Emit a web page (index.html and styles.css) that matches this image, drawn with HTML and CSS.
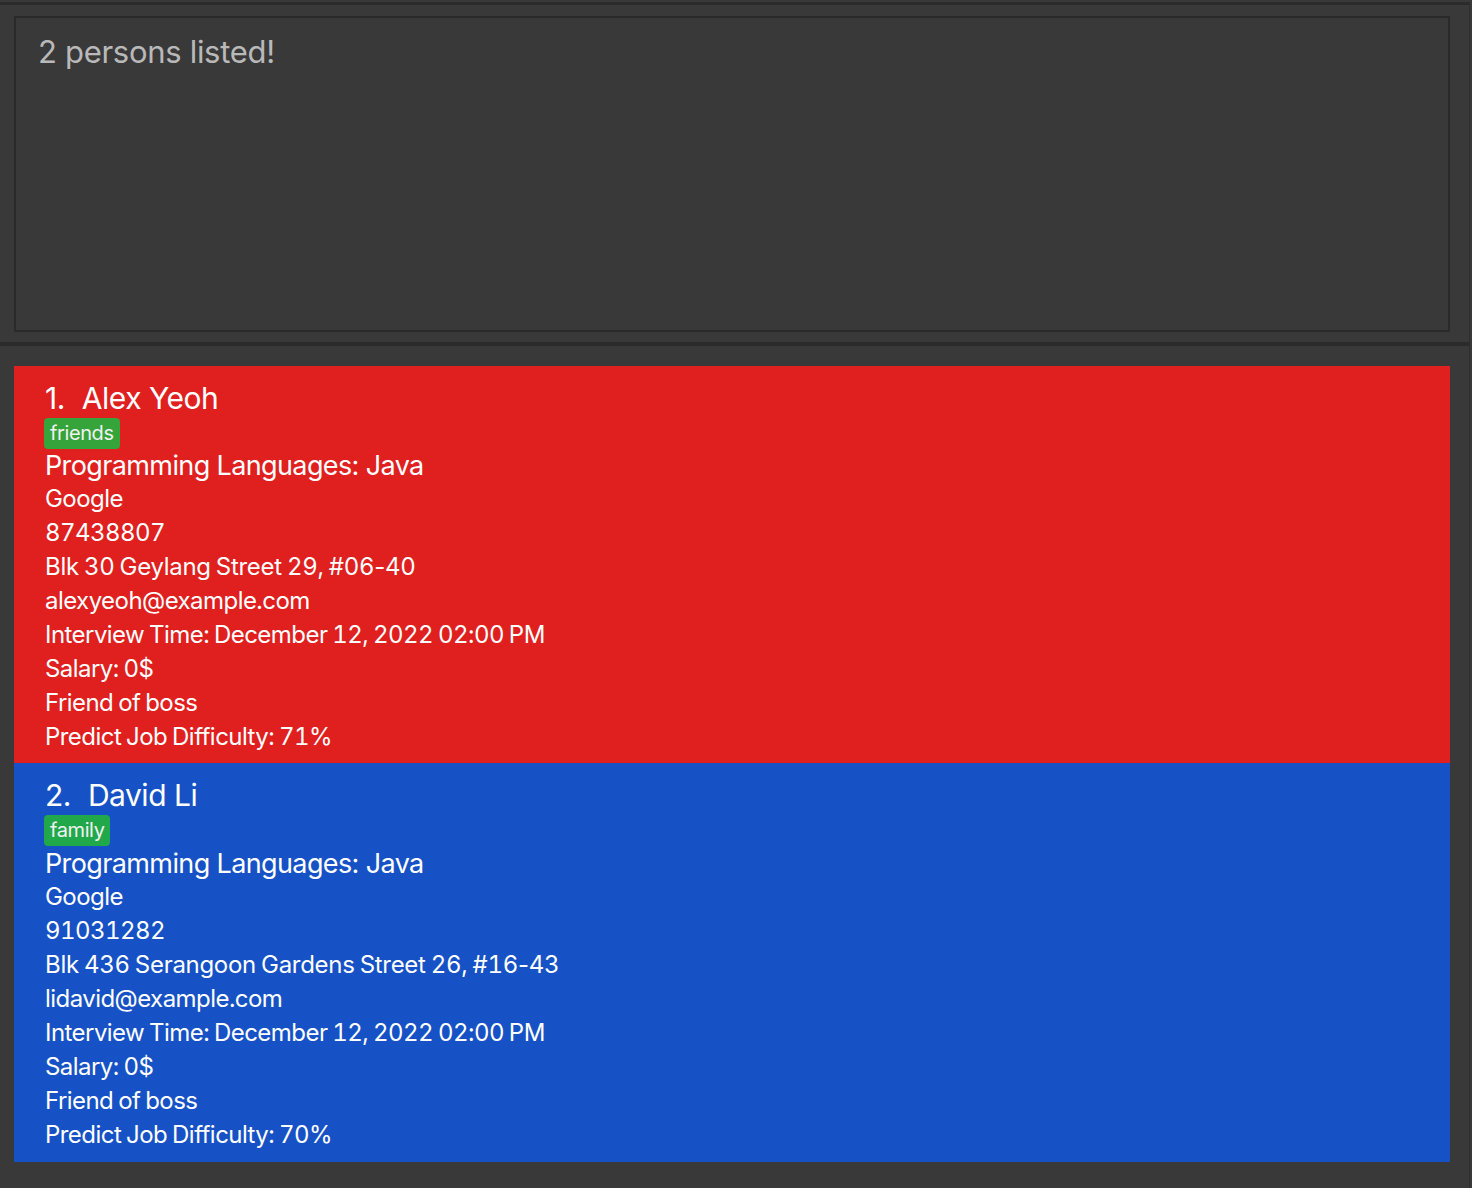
FILE: index.html
```html
<!DOCTYPE html>
<html>
<head>
<meta charset="utf-8">
<link rel="stylesheet" href="styles.css">
</head>
<body>
<div class="app">
  <div class="topbar"></div>
  <div class="result-pane">
    <div class="result-box">2 persons listed!</div>
  </div>
  <div class="separator"></div>
  <div class="list-pane">
    <div class="card card-red">
      <div class="name"><span class="idx">1.</span><span>Alex Yeoh</span></div>
      <div class="tags"><span class="tag tag-friends">friends</span></div>
      <div class="lang">Programming Languages: Java</div>
      <div class="line">Google</div>
      <div class="line">87438807</div>
      <div class="line address">Blk 30 Geylang Street 29, #06<span class="hy">-</span>40</div>
      <div class="line">alexyeoh@example.com</div>
      <div class="line">Interview Time: December 12, 2022 02:00 PM</div>
      <div class="line">Salary: 0$</div>
      <div class="line">Friend of boss</div>
      <div class="line">Predict Job Difficulty: 71%</div>
    </div>
    <div class="card card-blue">
      <div class="name"><span class="idx">2.</span><span>David Li</span></div>
      <div class="tags"><span class="tag tag-family">family</span></div>
      <div class="lang">Programming Languages: Java</div>
      <div class="line">Google</div>
      <div class="line">91031282</div>
      <div class="line address">Blk 436 Serangoon Gardens Street 26, #16<span class="hy">-</span>43</div>
      <div class="line">lidavid@example.com</div>
      <div class="line">Interview Time: December 12, 2022 02:00 PM</div>
      <div class="line">Salary: 0$</div>
      <div class="line">Friend of boss</div>
      <div class="line">Predict Job Difficulty: 70%</div>
    </div>
  </div>
</div>
</body>
</html>
```

FILE: styles.css
```css
html, body {
  margin: 0;
  padding: 0;
  background: #393939;
  height: 1188px;
  overflow: hidden;
}

.app {
  width: 1469px;
  height: 1188px;
  border-right: 1px solid #2e2e2e;
  font-family: Inter, "Noto Sans", sans-serif;
}

.topbar {
  height: 3px;
  margin-top: 2px;
  background: #2b2b2b;
}

.result-pane {
  padding: 11px 19px 10px 14px;
}

.result-box {
  border: 2px solid #2a2a2a;
  background: #393939;
  color: #b9b9b9;
  font-size: 31px;
  line-height: 40px;
  padding: 14px 0 0 22px;
  box-sizing: border-box;
  height: 316px;
  letter-spacing: -0.3px;
}

.separator {
  height: 4px;
  background: #2b2b2b;
}

.list-pane {
  padding: 20px 19px 0 14px;
}

.card {
  padding: 14px 0 9px 31px;
  color: #ffffff;
}

.card-red { background: #e01f1f; }
.card-blue { background: #1652c5; padding-bottom: 10px; }
.card-blue .tags { margin-bottom: 1px; }

.name {
  font-size: 30px;
  line-height: 36px;
  display: flex;
  gap: 17px;
  letter-spacing: -0.5px;
}

.tags {
  display: flex;
  margin-top: 2px;
}

.tag {
  height: 31px;
  line-height: 31px;
  font-size: 20px;
  padding: 0 6px;
  border-radius: 4px;
  margin-left: -1px;
  color: #f2f2f2;
  letter-spacing: -0.4px;
}

.tag-friends { background: #35a43a; }
.tag-family { background: #21a84b; }

.lang {
  font-size: 27px;
  line-height: 33px;
  letter-spacing: -0.62px;
}

.line {
  font-size: 24px;
  line-height: 34px;
  letter-spacing: -0.55px;
  word-spacing: -1px;
  font-feature-settings: "tnum";
}

.line.address {
  letter-spacing: -0.3px;
}

.hy {
  font-feature-settings: normal;
}
```
